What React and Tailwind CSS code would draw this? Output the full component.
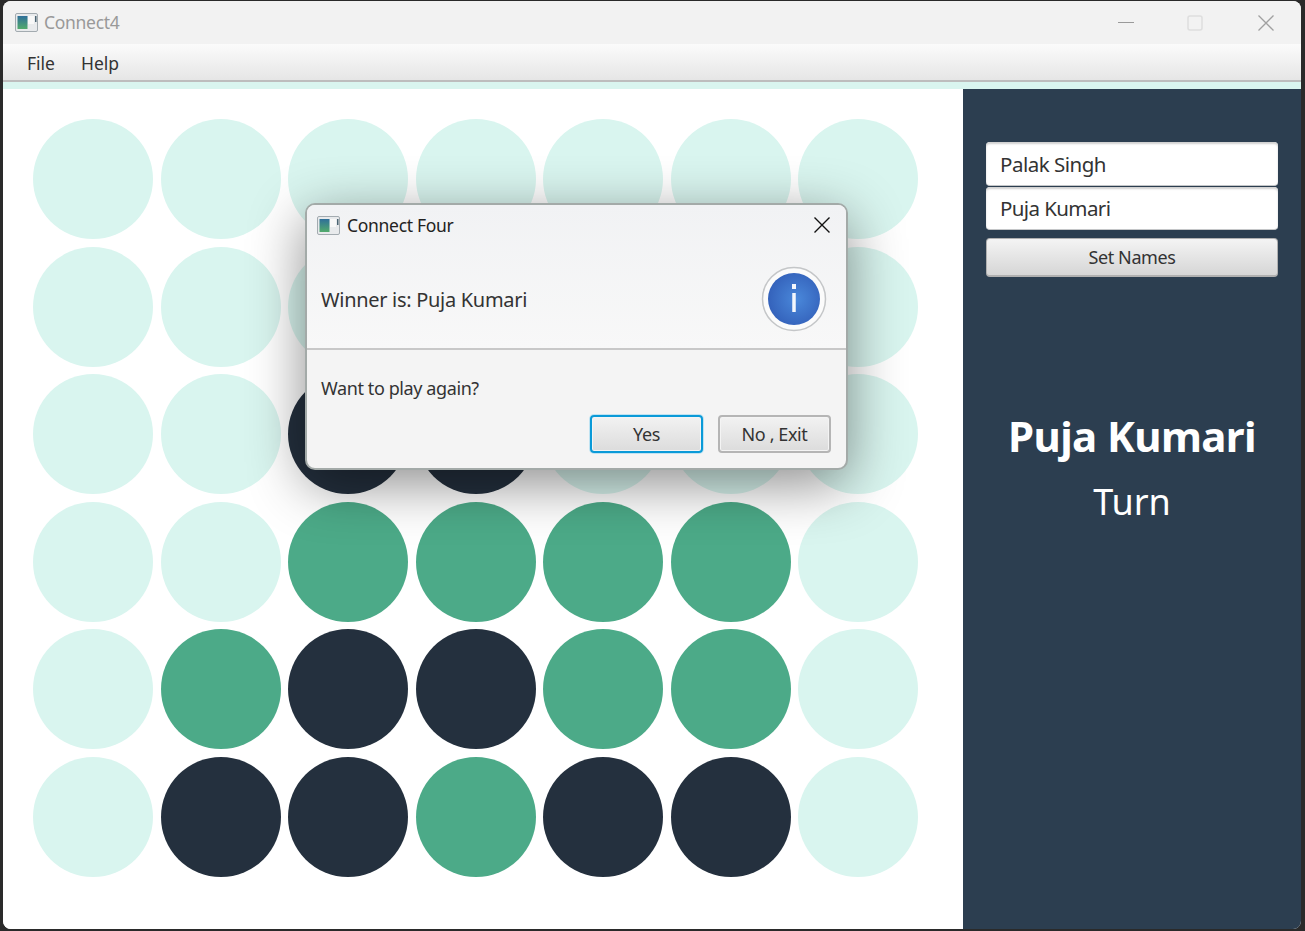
const FONT = "font-['Noto_Sans','Open_Sans',sans-serif]";

const M = "bg-[#d9f5ef]";
const G = "bg-[#4caa88]";
const D = "bg-[#24303e]";

const board = [
  [M, M, M, M, M, M, M],
  [M, M, M, M, M, M, M],
  [M, M, D, D, M, M, M],
  [M, M, G, G, G, G, M],
  [M, G, D, D, G, G, M],
  [M, D, D, G, D, D, M],
];

const AppIcon = () => (
  <svg width="23" height="19" viewBox="0 0 23 19">
    <rect x="0.5" y="0.5" width="22" height="18" rx="1.5" fill="#e8eaec" stroke="#a3abb0" />
    <defs>
      <linearGradient id="appIconFill" x1="0" y1="0" x2="0" y2="1">
        <stop offset="0" stopColor="#2f6f9a" />
        <stop offset="1" stopColor="#52ab6c" />
      </linearGradient>
    </defs>
    <rect x="2.5" y="3" width="10" height="13" fill="url(#appIconFill)" />
    <rect x="13" y="3" width="6" height="8" fill="#f8f8f8" />
    <rect x="20" y="3" width="1.5" height="6" fill="#4b6472" />
  </svg>
);

const InfoIcon = () => (
  <svg width="66" height="66" viewBox="0 0 66 66">
    <defs>
      <radialGradient id="infoFill" cx="0.55" cy="0.5" r="0.55">
        <stop offset="0" stopColor="#4a88da" />
        <stop offset="1" stopColor="#3462bb" />
      </radialGradient>
    </defs>
    <circle cx="33" cy="33" r="31.5" fill="#fbfbfb" stroke="#c4c6c8" strokeWidth="1.5" />
    <circle cx="33" cy="33" r="26" fill="url(#infoFill)" />
    <rect x="31" y="18" width="4" height="5" fill="#f4f7fc" />
    <rect x="31.25" y="27" width="3.5" height="19" fill="#f4f7fc" />
  </svg>
);

const DialogButton = ({ label, focused }) => (
  <button
    className={`h-[38px] w-[113px] rounded-[4px] bg-gradient-to-b from-[#f2f2f2] to-[#dcdcdc] text-[18px] tracking-[-0.4px] text-[#333] ${
      focused
        ? "border-2 border-[#0a9ad8] shadow-[0_0_0_1px_#bfe3f2,inset_0_0_0_1px_#f4f4f4]"
        : "border-2 border-[#b5b5b5] shadow-[inset_0_0_0_1px_#f4f4f4]"
    }`}
  >
    {label}
  </button>
);

const App = () => {
  return (
    <div className={`${FONT} flex h-[931px] w-[1305px] overflow-hidden bg-[#2a2a2a] pb-[2px] pl-[3px] pr-[4px] pt-[1px]`}>
      <div className="relative flex flex-1 flex-col overflow-hidden rounded-[8px] bg-white">
        {/* title bar */}
        <div className="flex h-[43px] items-center bg-[#f2f2f2] pl-[12px]">
          <AppIcon />
          <span className="ml-[6px] text-[17.5px] tracking-[-0.3px] text-[#999]">Connect4</span>
          <div className="ml-auto flex items-center text-[#999]">
            <svg width="16" height="16" viewBox="0 0 16 16" className="mr-[53px]">
              <path d="M0 7.5h16" stroke="#9a9a9a" strokeWidth="1" />
            </svg>
            <svg width="16" height="16" viewBox="0 0 16 16" className="mr-[55px]">
              <rect x="1" y="1" width="14" height="14" rx="2" fill="none" stroke="#dedede" strokeWidth="1.5" />
            </svg>
            <svg width="16" height="16" viewBox="0 0 16 16" className="mr-[27px]">
              <path d="M0.5 0.5l15 15M15.5 0.5l-15 15" stroke="#a0a0a0" strokeWidth="1.3" />
            </svg>
          </div>
        </div>

        {/* menu */}
        <div className="flex h-[38px] items-center gap-[26px] border-b-2 border-[#bdbdbd] bg-gradient-to-b from-[#fbfbfb] to-[#e6e6e6] pl-[24px] pt-[2px] text-[17.5px] text-[#333]">
          <span>File</span>
          <span>Help</span>
        </div>
        <div className="h-[7px] bg-[#d9f5ef]" />

        <div className="flex flex-1">
          {/* board */}
          <div className="w-[960px] bg-white pl-[30px] pt-[30px]">
            <div className="grid w-[885px] grid-cols-[repeat(7,120px)] gap-[7.5px]">
              {board.flat().map((color, i) => (
                <div key={i} className={`h-[120px] w-[120px] rounded-full ${color}`} />
              ))}
            </div>
          </div>

          {/* sidebar */}
          <div className="flex flex-1 flex-col bg-[#2c3e50] px-[23px] pt-[53px]">
            <div className="flex h-[44px] items-center rounded-[4px] border-b border-[#c4c6c8] bg-white pl-[14px] pt-[2px] text-[20.5px] tracking-[-0.5px] text-[#333] shadow-[inset_0_2px_2px_#d0d0d0]">
              Palak Singh
            </div>
            <div className="mt-[1px] flex h-[43px] items-center rounded-[4px] border-b border-[#c4c6c8] bg-white pl-[14px] text-[20.5px] tracking-[-0.6px] text-[#333] shadow-[inset_0_2px_2px_#d0d0d0]">
              Puja Kumari
            </div>
            <button className="mt-[8px] h-[39px] rounded-[4px] border border-b-2 border-[#b0b0b0] bg-gradient-to-b from-[#f4f4f4] to-[#d6d6d6] pt-[1px] text-[18px] tracking-[-0.4px] text-[#333]">
              Set Names
            </button>
            <div className="mt-[131px] text-center text-[42px] font-bold leading-[56px] tracking-[-0.6px] text-white">Puja Kumari</div>
            <div className="mt-[12px] text-center text-[36px] leading-[52px] text-white">Turn</div>
          </div>
        </div>

        {/* dialog */}
        <div className="absolute left-[302px] top-[202px] flex h-[267px] w-[543px] flex-col rounded-[10px] border-2 border-[#a3aaa8] bg-[#f4f4f4] shadow-[0_14px_55px_rgba(0,0,0,0.45)]">
          <div className="h-[145px] rounded-t-[8px] border-b-2 border-[#c8c8c8] bg-gradient-to-b from-[#f1f2f4] to-[#f8f8f8]">
            <div className="flex h-[40px] items-center pl-[10px] pr-[16px]">
              <AppIcon />
              <span className="ml-[7px] text-[17.5px] tracking-[-0.3px] text-[#222]">Connect Four</span>
              <svg width="16" height="16" viewBox="0 0 16 16" className="ml-auto">
                <path d="M0.5 0.5l15 15M15.5 0.5l-15 15" stroke="#111" strokeWidth="1.4" />
              </svg>
            </div>
            <div className="mt-[21px] flex items-center justify-between pl-[14px] pr-[19px]">
              <span className="pt-[2px] text-[20px] tracking-[-0.3px] text-[#333]">Winner is: Puja Kumari</span>
              <InfoIcon />
            </div>
          </div>
          <div className="pl-[14px] pt-[26px] text-[18px] leading-[24px] tracking-[-0.4px] text-[#333]">Want to play again?</div>
          <div className="mt-[15px] flex justify-end gap-[15px] pr-[15px]">
            <DialogButton label="Yes" focused />
            <DialogButton label="No , Exit" />
          </div>
        </div>
      </div>
    </div>
  );
};

export default App;
